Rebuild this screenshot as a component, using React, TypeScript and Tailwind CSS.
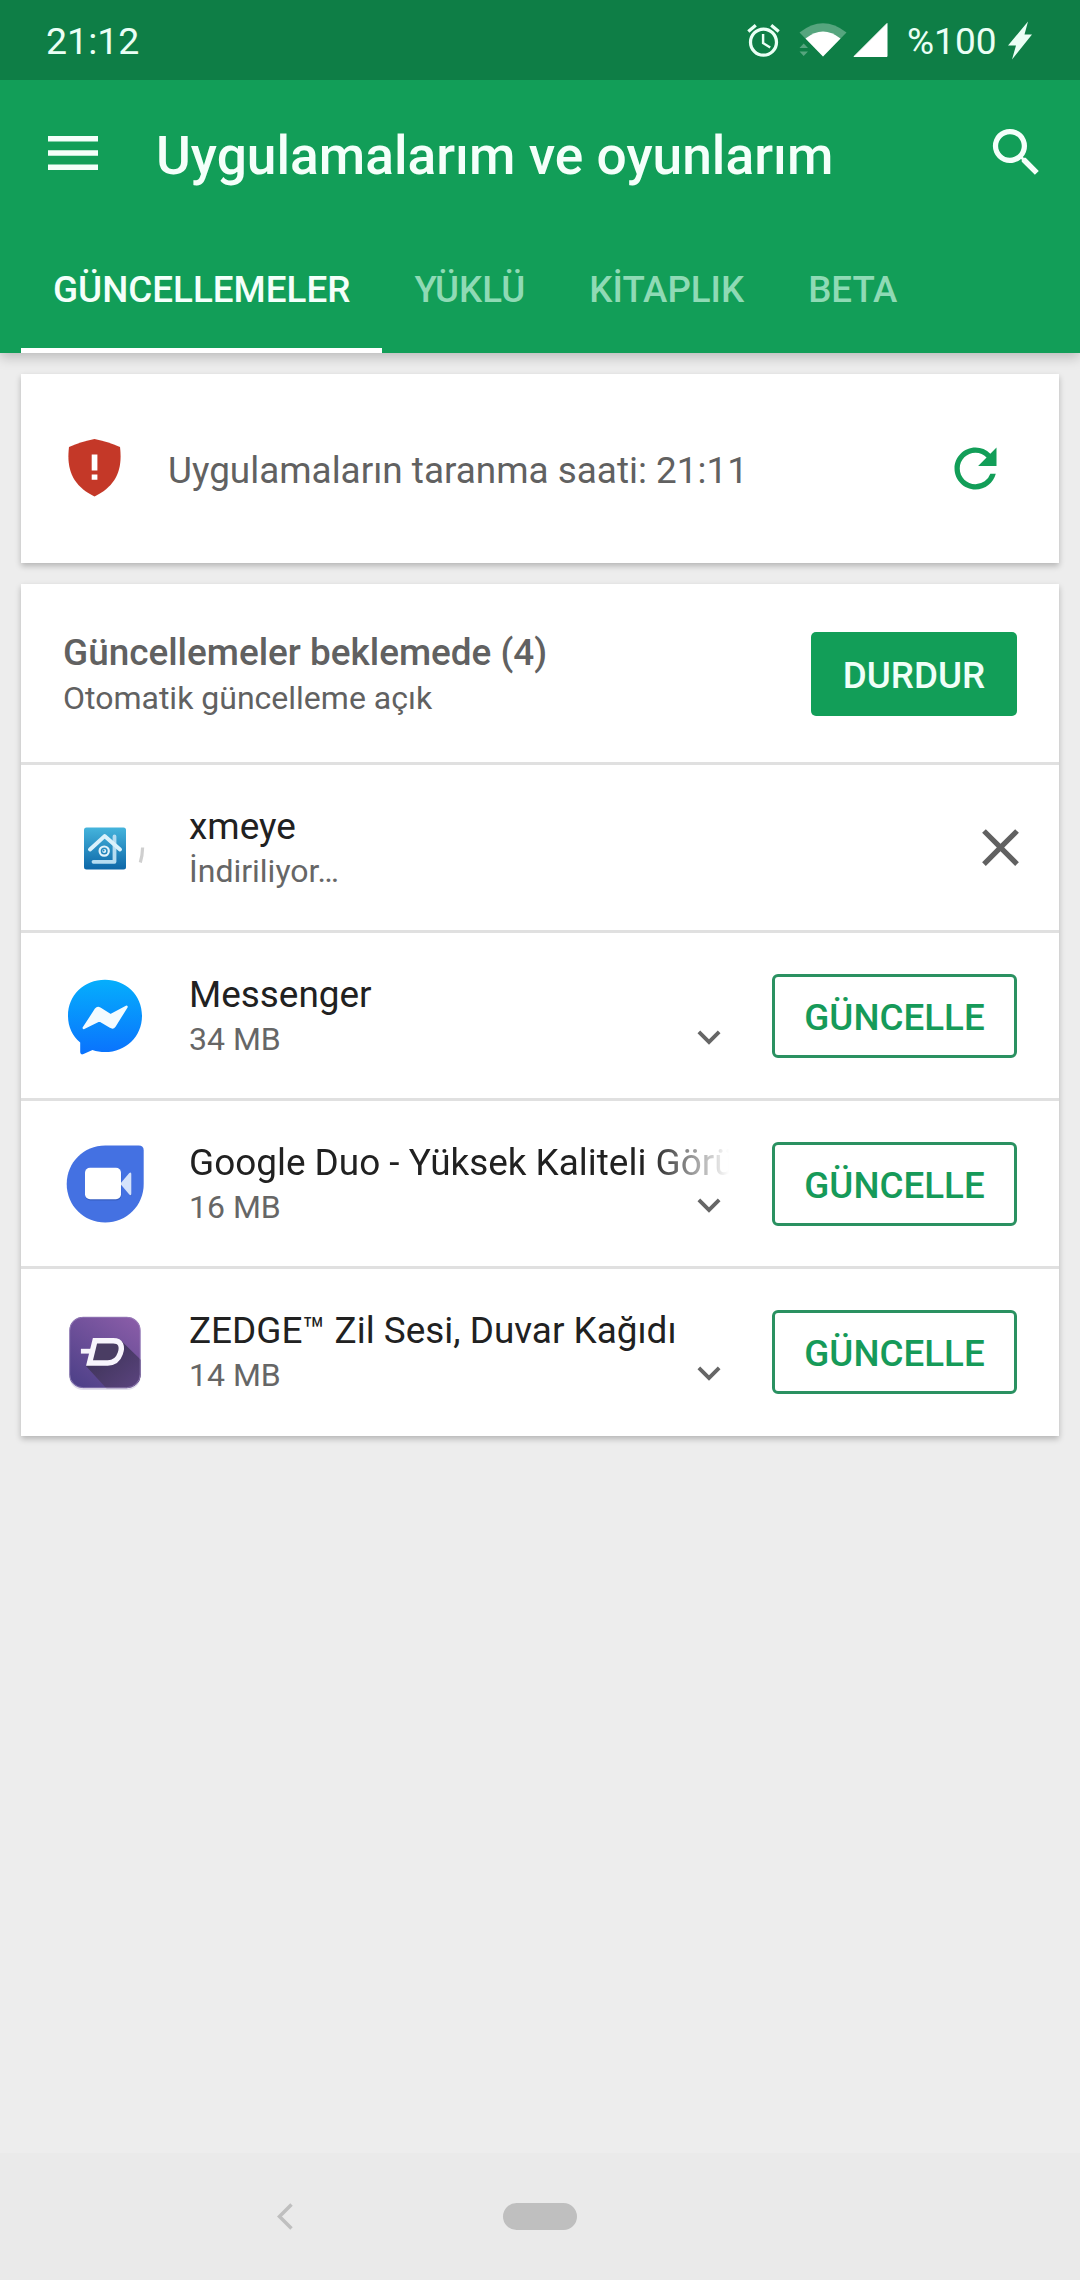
import type { ReactNode } from "react";
import { MdAccessAlarm, MdClose, MdExpandMore, MdRefresh, MdSearch } from "react-icons/md";

const TABS = ["GÜNCELLEMELER", "YÜKLÜ", "KİTAPLIK", "BETA"];

const XmeyeIcon = () => (
  <svg className="w-[84px] h-[84px] shrink-0" viewBox="0 0 84 84" fill="none">
    <defs>
      <linearGradient id="xmeye" x1="0" y1="0" x2="0" y2="1">
        <stop offset="0" stopColor="#45b4dc" />
        <stop offset="1" stopColor="#0d67a8" />
      </linearGradient>
    </defs>
    <g transform="translate(21 21.5)">
      <rect width="42" height="42" rx="2.5" fill="url(#xmeye)" />
      <path d="M30.5 9V34.3H9.5" stroke="#b5dcf1" strokeWidth="3.8" strokeLinecap="round" strokeLinejoin="round" />
      <path d="M6 22L20.6 8.6L36 22" stroke="#daf1fb" strokeWidth="4" strokeLinecap="round" strokeLinejoin="round" />
      <circle cx="20.2" cy="23.6" r="4.6" stroke="#e2f3fb" strokeWidth="2.2" />
      <circle cx="20.2" cy="23.6" r="2" fill="#e2f3fb" />
      <circle cx="19.6" cy="23" r="0.9" fill="#2488bd" />
    </g>
    {/* download progress ring, only a sliver is visible */}
    <path d="M79.6 41.5Q79.4 50 77.3 56.5" stroke="#cfcfcf" strokeWidth="3.2" />
  </svg>
);

const MessengerIcon = () => (
  <svg className="w-[84px] h-[84px] shrink-0" viewBox="0 0 84 84">
    <defs>
      <linearGradient id="messenger" x1="0" y1="0" x2="0" y2="1">
        <stop offset="0" stopColor="#05aefc" />
        <stop offset="1" stopColor="#0a72fd" />
      </linearGradient>
    </defs>
    <g transform="translate(5 5.8)">
      <path
        d="M37 0C16 0 0 15.5 0 36C0 47 4.5 56.5 12.2 62.8V72.5Q12.5 75.5 15.5 74.3L24.5 70.3C28.5 71.7 32.5 72.3 37 72.3C58 72.3 74 56.5 74 36C74 15.5 58 0 37 0Z"
        fill="url(#messenger)"
      />
      <path
        d="M15.8 48.2L28 29.5Q29.5 27.5 31.8 28.7L42.5 35.6L58.5 27L46.5 46.2Q45 48.5 42.5 47L31.5 40.3Z"
        fill="#f3fbff"
        stroke="#f3fbff"
        strokeWidth="2.5"
        strokeLinejoin="round"
      />
    </g>
  </svg>
);

const DuoIcon = () => (
  <svg className="w-[84px] h-[84px] shrink-0" viewBox="0 0 84 84">
    <g transform="translate(3.7 3.5)">
      <path
        d="M38.5 0H72Q77 0 77 5V38.5C77 60 60 77 38.5 77S0 60 0 38.5S17 0 38.5 0Z"
        fill="#4471e2"
      />
      <rect x="18.6" y="23.6" width="36" height="31.4" rx="5" fill="#3157b5" opacity="0.7" />
      <path d="M54 38L64.6 27.5V51Z" fill="#3157b5" opacity="0.5" />
      <path d="M53.5 38.3L62.6 27.6Q64.6 25.8 64.6 28.5V48Q64.6 50.8 62.6 49Z" fill="#d4e2fb" />
      <rect x="18.3" y="22.3" width="36" height="31.4" rx="5" fill="#fff" />
    </g>
  </svg>
);

const ZedgeIcon = () => (
  <svg className="w-[84px] h-[84px] shrink-0" viewBox="0 0 84 84">
    <defs>
      <linearGradient id="zedge" x1="0.9" y1="0" x2="0.2" y2="1">
        <stop offset="0" stopColor="#8a5da8" />
        <stop offset="1" stopColor="#4f4189" />
      </linearGradient>
      <linearGradient id="zedge-shade" x1="0" y1="0" x2="1" y2="1">
        <stop offset="0" stopColor="#37304f" />
        <stop offset="1" stopColor="#5c4480" />
      </linearGradient>
      <clipPath id="zedge-clip">
        <rect width="71.5" height="71.5" rx="14" />
      </clipPath>
    </defs>
    <g transform="translate(6.2 6.7)">
      <rect y="1.8" width="71.5" height="71.5" rx="14" fill="#e2dfec" />
      <g clipPath="url(#zedge-clip)">
        <rect width="71.5" height="71.5" fill="url(#zedge)" />
        <path d="M25 24H52L72 43.5V72H37.5L17 49.5Z" fill="url(#zedge-shade)" />
        <path d="M26 24H46Q54 30 49 40Q45 46 38 46H20Z" fill="#4a3d63" />
      </g>
      <rect x="0.5" y="0.5" width="70.5" height="70.5" rx="13.5" fill="none" stroke="#a491c4" strokeOpacity="0.6" />
      <path d="M11.7 34.5H23" stroke="#f8f5fc" strokeWidth="4.8" />
      <path
        d="M25.8 24H44C52 24 53.5 30 51 37C49 43 45 46.3 38.5 46.3H20.3Z"
        fill="none"
        stroke="#f8f5fc"
        strokeWidth="5.4"
      />
    </g>
  </svg>
);

const StatusBar = () => (
  <div className="flex h-20 items-center bg-[#0e7e46] pl-[46px] pr-12 text-[37.5px] text-[#eafff5]">
    <span className="pt-[3px]">21:12</span>
    <MdAccessAlarm className="ml-auto h-[39px] w-[39px]" />
    <svg className="ml-4 h-[34px] w-12" viewBox="0 0 48 34">
      <path d="M0.5 9.5Q24 -9 47.5 9.5L24 33.5Z" fill="#56a57e" />
      <path d="M6.5 15.5Q24 1.5 41.5 15.5L24 33.5Z" fill="#fff" />
      <path d="M0 20L4.5 18L12 25.5V33.5H0Z" fill="#0e7e46" />
      <path d="M0.5 25L4.7 20.5L9 25ZM0.5 28.5H9L4.7 33Z" fill="#56a57e" />
    </svg>
    <svg className="ml-1.5 h-[34px] w-[35px]" viewBox="0 0 35 34">
      <path d="M1 33.5L34 0.5V33.5Z" fill="#fff" stroke="#fff" strokeLinejoin="round" />
    </svg>
    <span className="ml-[19px] w-[90px] pt-[3px] text-[37px]">%100</span>
    <svg className="ml-[11px] h-[39px] w-6" viewBox="0 0 24 39">
      <path d="M20 0.5L16.5 13.5H24L4 38.5L8 24.5H0Z" fill="currentColor" />
    </svg>
  </div>
);

const Header = () => (
  <header className="relative z-10 bg-[#129e58] text-[#f4fffa] shadow-[0_4px_12px_rgba(0,0,0,0.22)]">
    <StatusBar />
    <div className="flex h-[146px] items-center pl-12 pr-8">
      <svg className="h-[34px] w-[50px]" viewBox="0 0 50 34">
        <path d="M0 0H50V5.5H0ZM0 14.25H50V19.75H0ZM0 28.5H50V34H0Z" fill="currentColor" />
      </svg>
      <h1 className="ml-[58px] pt-[5px] text-[53.3px] font-medium leading-[64px]">Uygulamalarım ve oyunlarım</h1>
      <MdSearch className="-mt-0.5 ml-auto h-[63px] w-[63px]" />
    </div>
    <nav className="flex h-[127px] pl-[21px]">
      {TABS.map((tab, i) => (
        <div
          key={tab}
          className={
            i === 0
              ? "flex items-center border-b-[5px] border-white px-8 pt-[5px] text-[36.8px] font-medium"
              : "flex items-center border-b-[5px] border-transparent px-8 pt-[5px] text-[36.7px] font-medium text-[#8fdab5]"
          }
        >
          {tab}
        </div>
      ))}
    </nav>
  </header>
);

const ScanCard = () => (
  <section className="flex h-[189px] items-center bg-white pl-[47px] pr-[52px] shadow-[0_3px_6px_rgba(0,0,0,0.24)]">
    <svg className="-mt-px h-[58px] w-[53px]" viewBox="0 0 53 58">
      <path
        d="M26.5 0C35 1.5 44 4.5 52 8C55 32 47 47.5 26.5 57.5C6 47.5 -2 32 1 8C9 4.5 18 1.5 26.5 0Z"
        fill="#c43828"
      />
      <path d="M23.7 15.6H29.4V31.5H23.7ZM23.7 35.5H29.4V40.8H23.7Z" fill="#fff" />
    </svg>
    <p className="ml-[47px] pt-[5px] text-[36.9px] text-[#616161]">Uygulamaların taranma saati: 21:11</p>
    <MdRefresh className="ml-auto h-[63px] w-[63px] text-[#129e58]" />
  </section>
);

type AppRowProps = {
  icon: ReactNode;
  name: string;
  detail: string;
  downloading?: boolean;
  faded?: boolean;
  last?: boolean;
};

const AppRow = ({ icon, name, detail, downloading, faded, last }: AppRowProps) => (
  <li
    className={
      last
        ? "flex h-[167px] items-center pb-0.5 pl-[42px]"
        : "flex h-[168px] items-center border-b-[3px] border-[#e0e0e0] pl-[42px]"
    }
  >
    {icon}
    <div className="ml-[42px] w-[540px] pt-[3px]">
      <p
        className={
          faded
            ? "h-11 overflow-hidden whitespace-nowrap text-[36.9px] leading-[44px] text-[#212121] [mask-image:linear-gradient(to_right,#000_462px,transparent_540px)]"
            : "h-11 whitespace-nowrap text-[36.9px] leading-[44px] text-[#212121]"
        }
      >
        {name}
      </p>
      <div className="flex h-11 items-center justify-between text-[32px] leading-[44px] text-[#666]">
        {detail}
        {!downloading && <MdExpandMore className="-mr-[3px] mb-1 h-[46px] w-[46px]" />}
      </div>
    </div>
    {downloading ? (
      <MdClose className="ml-auto mr-[27px] h-[63px] w-[63px] text-[#616161]" />
    ) : (
      <button className="ml-auto mr-[42px] h-[84px] w-[245px] rounded-[6px] border-[3px] border-[#2a9161] pt-1 text-[36.75px] font-medium text-[#169a59]">
        GÜNCELLE
      </button>
    )}
  </li>
);

const UpdatesCard = () => (
  <section className="bg-white shadow-[0_3px_6px_rgba(0,0,0,0.24)]">
    <div className="flex h-[181px] items-center justify-between border-b-[3px] border-[#e0e0e0] px-[42px] text-[#616161]">
      <div className="pt-[5px]">
        <h2 className="text-[36.9px] font-medium leading-[44px]">Güncellemeler beklemede (4)</h2>
        <p className="text-[32px] leading-[46px]">Otomatik güncelleme açık</p>
      </div>
      <button className="mt-0.5 h-[84px] w-[206px] rounded-[5px] bg-[#129e58] pt-[3px] text-[36.75px] font-medium text-[#f0fff8]">
        DURDUR
      </button>
    </div>
    <ul>
      <AppRow icon={<XmeyeIcon />} name="xmeye" detail="İndiriliyor…" downloading />
      <AppRow icon={<MessengerIcon />} name="Messenger" detail="34 MB" />
      <AppRow icon={<DuoIcon />} name="Google Duo - Yüksek Kaliteli Görü" detail="16 MB" faded />
      <AppRow icon={<ZedgeIcon />} name="ZEDGE™ Zil Sesi, Duvar Kağıdı" detail="14 MB" last />
    </ul>
  </section>
);

const NavigationBar = () => (
  <footer className="grid h-[127px] grid-cols-[1fr_74px_1fr] items-center bg-[#eaeaea]">
    <svg className="ml-[277px] h-[27px] w-4" viewBox="0 0 16 27" fill="none">
      <path d="M14.5 1.5L2.5 13.5L14.5 25.5" stroke="#bfbfbf" strokeWidth="3.5" />
    </svg>
    <div className="h-[27px] rounded-full bg-[#bfbfbf]" />
  </footer>
);

export default function App() {
  return (
    <div className="flex h-[2280px] w-[1080px] flex-col overflow-hidden bg-[#ededed] font-['Roboto',sans-serif]">
      <Header />
      <main className="flex flex-1 flex-col gap-[21px] p-[21px]">
        <ScanCard />
        <UpdatesCard />
      </main>
      <NavigationBar />
    </div>
  );
}
